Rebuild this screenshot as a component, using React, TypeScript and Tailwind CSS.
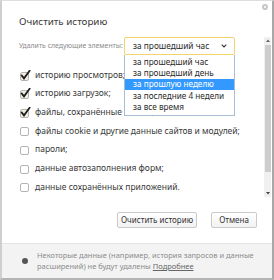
import React from "react";

const rows: { label: string; extra?: string; checked: boolean }[] = [
  { label: "историю просмотров;", extra: " — 1 248 элементов", checked: true },
  { label: "историю загрузок;", checked: true },
  { label: "файлы, сохранённые в кэше;", extra: " — менее 120 МБ", checked: true },
  { label: "файлы cookie и другие данные сайтов и модулей;", checked: false },
  { label: "пароли;", checked: false },
  { label: "данные автозаполнения форм;", checked: false },
  { label: "данные сохранённых приложений.", checked: false },
];

const options = [
  "за прошедший час",
  "за прошедший день",
  "за прошлую неделю",
  "за последние 4 недели",
  "за все время",
];

function Check({ checked }: { checked: boolean }) {
  return (
    <svg width="12" height="11" viewBox="0 0 12 11" className="shrink-0">
      <rect
        x="0.5"
        y="2.5"
        width="8"
        height="8"
        rx="1.5"
        fill={checked ? "#f3efe0" : "#ffffff"}
        stroke="#b4b4b4"
      />
      {checked && (
        <path d="M1.8 5.6 L4 8.4 L9.6 0.8" fill="none" stroke="#1e1e1e" strokeWidth="1.8" strokeLinecap="square" />
      )}
    </svg>
  );
}

export default function App() {
  return (
    <div className="relative flex h-[280px] w-[274px] flex-col overflow-hidden border-b-2 border-l-2 border-r-2 border-t border-b-[#b4b4b4] border-l-[#cfcfcf] border-r-[#a8a8a8] border-t-[#dedede] bg-white font-['Noto_Sans',sans-serif] text-[#333]">
      {/* close */}
      <div className="absolute right-[4px] top-[3px] flex h-[6px] w-[6px] items-center justify-center rounded-full bg-[#c4c4c4]">
        <svg width="4" height="4" viewBox="0 0 4 4">
          <path d="M0.8 0.8 L3.2 3.2 M3.2 0.8 L0.8 3.2" stroke="#fff" strokeWidth="0.8" />
        </svg>
      </div>

      <div className="h-[36px] pl-[17px] pt-[15px] text-[9.8px] leading-[12px] text-[#3a3a3a]">
        Очистить историю
      </div>

      <div className="flex pl-[17px] pr-[1px]">
        <div className="relative flex-1">
          <div className="flex h-[18px] items-center">
            <div className="w-[105px] whitespace-nowrap text-[6.9px] text-[#8a8a8a]">
              Удалить следующие элементы:
            </div>
            <div className="flex h-[18px] w-[111px] items-center justify-between rounded-[2px] border border-[#f2d46a] bg-white pl-[8px] pr-[7px] text-[8.3px] text-[#2a2a2a]">
              <span className="whitespace-nowrap">за прошедший час</span>
              <svg width="6" height="4" viewBox="0 0 6 4">
                <path d="M0.7 0.7 L3 3 L5.3 0.7" fill="none" stroke="#333" strokeWidth="1.1" />
              </svg>
            </div>
          </div>

          <div className="flex flex-col pt-[10.7px]">
            {rows.map((r) => (
              <div key={r.label} className="flex h-[18.67px] items-center gap-[3px] pl-[1px]">
                <Check checked={r.checked} />
                <span className="whitespace-nowrap text-[8.5px] text-[#3a3a3a]">
                  {r.label}
                  {r.extra && <span className="text-[#a0a0a0]">{r.extra}</span>}
                </span>
              </div>
            ))}
          </div>

          {/* dropdown list */}
          <div className="absolute left-[105px] top-[18px] w-[111px] border border-t-0 border-[#a9bdd6] bg-white pb-[2px] pt-[1px]">
            {options.map((o, i) => (
              <div
                key={o}
                className={
                  i === 2
                    ? "flex h-[11.4px] items-center bg-[#3399ff] pl-[8px] text-[8.2px] text-white"
                    : "flex h-[11.4px] items-center pl-[8px] text-[8.2px] text-[#2a2a2a]"
                }
              >
                <span className="whitespace-nowrap">{o}</span>
              </div>
            ))}
          </div>
        </div>

        {/* scrollbar */}
        <div className="flex h-[160px] w-[7px] flex-col bg-[#f0f0f0]">
          <div className="flex h-[7px] items-center justify-center">
            <svg width="4" height="3" viewBox="0 0 4 3">
              <path d="M0 3 L2 0.5 L4 3 Z" fill="#606060" />
            </svg>
          </div>
          <div className="mx-[0.5px] mt-[1px] h-[127px] bg-[#cdcdcd]" />
          <div className="flex-1" />
          <div className="flex h-[8px] items-center justify-center">
            <svg width="4" height="3" viewBox="0 0 4 3">
              <path d="M0 0 L2 2.5 L4 0 Z" fill="#404040" />
            </svg>
          </div>
        </div>
      </div>

      <div className="mt-[15px] flex justify-end gap-[14px] pr-[15px]">
        <div className="flex h-[16px] w-[80px] items-center justify-center rounded-[2px] border border-[#cacaca] bg-gradient-to-b from-white to-[#f2f2f2] text-[8px] text-[#333]">
          Очистить историю
        </div>
        <div className="flex h-[16px] w-[46px] items-center justify-center rounded-[2px] border border-[#cacaca] bg-gradient-to-b from-white to-[#f2f2f2] text-[8px] text-[#333]">
          Отмена
        </div>
      </div>

      <div className="mt-auto flex h-[35px] items-center gap-[9px] border-t border-[#e4e4e4] bg-[#f3f3f3] pl-[20px]">
        <div className="h-[6px] w-[6px] shrink-0 rounded-full bg-[#555]" />
        <div className="text-[7.5px] leading-[11px] text-[#8c8c8c]">
          <div className="whitespace-nowrap">Некоторые данные (например, история запросов и данные</div>
          <div className="whitespace-nowrap">
            расширений) не будут удалены <span className="text-[#666] underline">Подробнее</span>
          </div>
        </div>
      </div>
    </div>
  );
}
